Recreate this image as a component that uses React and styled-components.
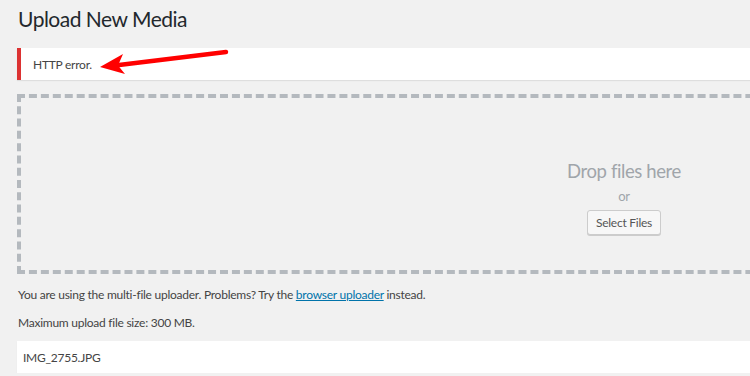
import React from 'react';
import styled, { createGlobalStyle } from 'styled-components';

const GlobalStyle = createGlobalStyle`
  html, body {
    margin: 0;
    padding: 0;
    background: #f1f1f1;
    overflow: hidden;
  }
  body {
    font-family: Lato, "Open Sans", sans-serif;
    color: #444;
    letter-spacing: -0.25px;
  }
`;

const Wrap = styled.div`
  padding: 0 0 0 17px;
  width: 1214px;
`;

const Title = styled.h1`
  margin: 0;
  padding: 4px 0 0 1px;
  font-size: 21px;
  font-weight: 400;
  letter-spacing: -0.5px;
  line-height: 29px;
  color: #23282d;
`;

const Notice = styled.div`
  position: relative;
  margin-top: 15px;
  height: 32px;
  display: flex;
  align-items: center;
  padding-left: 12px;
  background: #fff;
  border-left: 4px solid #dc3232;
  box-shadow: 0 1px 1px rgba(0, 0, 0, 0.08);
  font-size: 12px;
`;

const Arrow = styled.svg`
  position: absolute;
  left: 78px;
  top: 0;
`;

const DropZone = styled.div`
  margin-top: 14px;
  height: 172px;
  border: 4px dashed #b4b9be;
  display: flex;
  flex-direction: column;
  align-items: center;
  justify-content: center;
`;

const DropText = styled.div`
  font-size: 18.5px;
  letter-spacing: -0.4px;
  color: #a0a5aa;
  margin-top: 26px;
`;

const Or = styled.div`
  font-size: 13px;
  color: #a0a5aa;
  margin: 6px 0 6px;
`;

const Button = styled.button`
  font-family: inherit;
  font-size: 12px;
  letter-spacing: -0.25px;
  color: #555;
  background: #f7f7f7;
  border: 1px solid #ccc;
  border-radius: 3px;
  box-shadow: 0 1px 0 #ccc;
  height: 25px;
  padding: 0 8px;
`;

const Line = styled.p`
  margin: ${(p) => p.$top}px 0 0 1px;
  font-size: 12px;
  line-height: 16px;
`;

const Link = styled.a`
  color: #0073aa;
  text-decoration: underline;
`;

const FileRow = styled.div`
  margin-top: 10px;
  height: 32px;
  display: flex;
  align-items: center;
  padding-left: 6px;
  background: #fff;
  box-shadow: 0 1px 1px rgba(0, 0, 0, 0.05);
  font-size: 12px;
`;

export default function App() {
  return (
    <>
      <GlobalStyle />
      <Wrap>
        <Title>Upload New Media</Title>
        <Notice>
          HTTP error.
          <Arrow width="140" height="34" viewBox="0 0 140 34">
            <path d="M127 4 L20 17" stroke="#f00" strokeWidth="4.5" strokeLinecap="round" />
            <path d="M1 19 L24 6 L19 17.5 L26 26 Z" fill="#f00" />
          </Arrow>
        </Notice>
        <DropZone>
          <DropText>Drop files here</DropText>
          <Or>or</Or>
          <Button>Select Files</Button>
        </DropZone>
        <Line $top={13}>
          You are using the multi-file uploader. Problems? Try the <Link href="#">browser uploader</Link> instead.
        </Line>
        <Line $top={12}>Maximum upload file size: 300 MB.</Line>
        <FileRow>IMG_2755.JPG</FileRow>
      </Wrap>
    </>
  );
}
